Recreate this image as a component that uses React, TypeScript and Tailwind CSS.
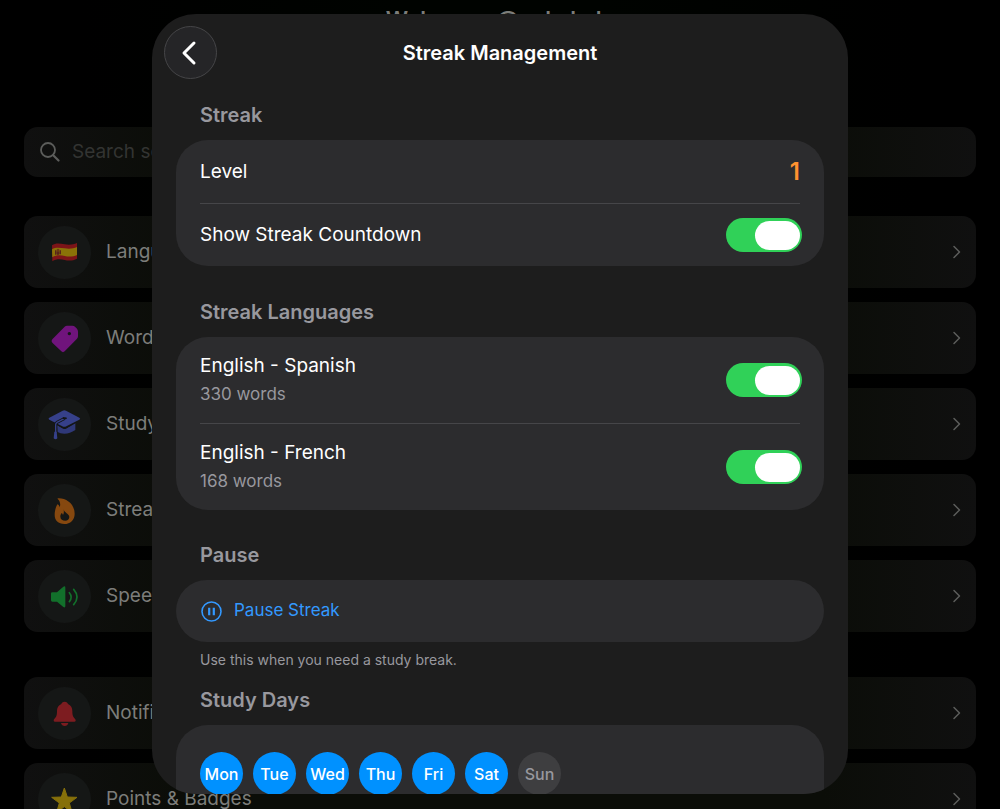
import { useState, type ReactNode } from "react";

function Flag() {
  return (
    <>
      <path d="M42 58 C52 50 66 52 80 55 C94 57 106 56 117 51 V98 C106 104 93 105 80 102 C67 99 54 99 43 106 Z" fill="#7c1418" />
      <path d="M42 70 C52 63 66 65 80 67 C94 69 106 68 117 63 V87 C106 92 93 93 80 90 C67 87 54 87 43 94 Z" fill="#8a7208" />
      <path d="M51 73 h4 v13 h-4z M65 73 h4 v12 h-4z M56 76 h8 v9 q-4 4 -8 0z" fill="#59251a" />
      <path d="M56 71 q4 -5 8 0 v4 h-8z" fill="#6b3a12" />
    </>
  );
}

function Tag() {
  return (
    <path
      fill="#70147c"
      fillRule="evenodd"
      d="M87 41 H103 Q108 41 111 44 L117 50 Q120 54 120 59 V73 Q120 77 117 80 L80 118 Q75 123 70 118 L43 92 Q38 87 43 82 L80 44 Q83 41 87 41 Z M94 60 a5 5 0 1 0 0.010 0 Z"
    />
  );
}

function Cap() {
  return (
    <>
      <path d="M48 76 L76 92 Q80 94 84 92 L112 76 V96 Q96 107 79 107 Q66 107 59 102 L58 84 Z" fill="#2f3878" />
      <path d="M34 67 L73 89 Q79 92 85 89 L124 67" fill="none" stroke="#131516" strokeWidth="3" />
      <path d="M74 38 Q79 36 84 38 L124 59 Q129 62 124 65 L85 85 Q79 88 73 85 L34 65 Q29 62 34 59 Z" fill="#36408a" />
      <path d="M80 61 L57 73 Q53 75 53 80 V84" fill="none" stroke="#131516" strokeWidth="9" />
      <path d="M80 61 L57 73 Q53 75 53 80 V104" fill="none" stroke="#36408a" strokeWidth="4" strokeLinecap="round" />
      <ellipse cx="80" cy="61" rx="7" ry="3" fill="#131516" />
      <path d="M49 101 H56 L58 121 Q53 127 47 121 Z" fill="#36408a" />
    </>
  );
}

function Flame() {
  return (
    <path
      fill="#86480f"
      fillRule="evenodd"
      d="M59 43 C84 41 110 60 110 89 C110 108 97 120 79 120 C61 120 50 109 50 93 C50 80 54 68 58 61 C63 63 64 66 65 70 C69 60 65 50 59 45 Z M77 76 C78 86 94 90 94 99 C94 106 88 110 82 110 C74 110 67 106 67 98 C67 93 69 90 71 87 C74 89 74 91 75 93 C78 88 78 83 77 76 Z"
    />
  );
}

function Speaker() {
  return (
    <>
      <path d="M39 70 Q39 67 43 67 H57 L76 50 Q82 46 82 53 V108 Q82 115 76 111 L57 95 H43 Q39 95 39 91 Z" fill="#12702b" />
      <path d="M94 68 Q105 81 94 95 M107 58 Q127 81 107 104" fill="none" stroke="#12702b" strokeWidth="5" strokeLinecap="round" />
    </>
  );
}

function Bell() {
  return (
    <>
      <path d="M80 44 C86 44 89 47 90 51 C99 55 103 62 103 72 C103 88 106 90 112 97 Q115 104 109 104 H51 Q45 104 48 97 C54 90 57 88 57 72 C57 62 61 55 70 51 C71 47 74 44 80 44 Z" fill="#7d1c20" />
      <path d="M69 108 H91 C89 120 71 120 69 108 Z" fill="#7d1c20" />
    </>
  );
}

function Star() {
  return (
    <path
      fill="#86700a"
      stroke="#86700a"
      strokeWidth="3"
      strokeLinejoin="round"
      d="M79 45 L88 72 L117 73 L94 90 L102 118 L79 101 L56 118 L64 90 L41 73 L70 72 Z"
    />
  );
}

function MenuRow({ label, icon }: { label: string; icon: ReactNode }) {
  return (
    <a href="#" className="flex h-[72px] items-center rounded-[14px] bg-[linear-gradient(90deg,#101010_0%,#0b0d08_16%,#0b0d08_84%,#101010_100%)] pr-[13px] pl-3.5">
      <span className="size-[53px] shrink-0 rounded-full bg-[#151716]">
        <svg viewBox="0 0 159 159" className="size-full" aria-hidden="true">
          {icon}
        </svg>
      </span>
      <span className="ml-[15px] flex-1 text-[19px] leading-7">{label}</span>
      <svg viewBox="0 0 12 16" className="h-4 w-3 text-[#5c5d5b]" fill="none" stroke="currentColor" strokeWidth="1.5" strokeLinecap="round" strokeLinejoin="round" aria-hidden="true">
        <path d="M3 2.500 L8.500 8 L3 13.500" />
      </svg>
    </a>
  );
}

function Switch({ id, initial = true }: { id: string; initial?: boolean }) {
  const [on, setOn] = useState(initial);
  return (
    <input
      id={id}
      type="checkbox"
      role="switch"
      checked={on}
      onChange={(e) => setOn(e.target.checked)}
      className="flex h-[34px] w-[76px] shrink-0 cursor-pointer appearance-none items-center rounded-full bg-[#4a4a4d] p-0.5 before:h-[29px] before:w-[45px] before:rounded-full before:bg-white checked:justify-end checked:bg-[#30d158]"
    />
  );
}

function SectionTitle({ children }: { children: ReactNode }) {
  return <h2 className="px-6 text-xl leading-7 font-semibold text-[#98989e]">{children}</h2>;
}

function Divider() {
  return <div className="mx-6 h-px bg-[#464649]" />;
}

const languages = [
  { id: "es", name: "English - Spanish", words: "330 words" },
  { id: "fr", name: "English - French", words: "168 words" },
];

const week = ["Mon", "Tue", "Wed", "Thu", "Fri", "Sat", "Sun"];

function StudyDays() {
  const [days, setDays] = useState(week.slice(0, 6));
  const toggle = (day: string) =>
    setDays((cur) => (cur.includes(day) ? cur.filter((d) => d !== day) : [...cur, day]));
  return (
    <div className="flex gap-2.5">
      {week.map((day) => {
        const active = days.includes(day);
        return (
          <button
            key={day}
            type="button"
            aria-pressed={active}
            onClick={() => toggle(day)}
            className={
              active
                ? "size-[43px] rounded-full bg-[#0091ff] text-base font-medium text-white"
                : "size-[43px] rounded-full bg-[#3e3e40] text-base font-medium text-[#98989e]"
            }
          >
            {day}
          </button>
        );
      })}
    </div>
  );
}

function StreakSheet() {
  return (
    <div
      role="dialog"
      aria-label="Streak Management"
      className="flex w-full max-w-[696px] flex-col overflow-hidden rounded-[44px] bg-[#1d1d1d] px-6"
    >
      <header className="-mx-3 grid shrink-0 grid-cols-[53px_1fr_53px] items-center pt-3">
        <button
          type="button"
          aria-label="Back"
          className="flex size-[53px] items-center justify-center rounded-full border border-[#464648] bg-[#252527] text-white"
        >
          <svg viewBox="0 0 16 26" className="mr-1 h-[26px] w-4" fill="none" stroke="currentColor" strokeWidth="3" strokeLinecap="round" strokeLinejoin="round" aria-hidden="true">
            <path d="M13 3 L3 13 L13 23" />
          </svg>
        </button>
        <h1 className="text-center text-xl font-semibold text-white">Streak Management</h1>
      </header>

      <section className="mt-[22px]">
        <SectionTitle>Streak</SectionTitle>
        <div className="mt-[11px] rounded-[32px] bg-[#2c2c2e]">
          <div className="flex h-[63px] items-center justify-between px-6">
            <span className="text-[19px] leading-7 text-white">Level</span>
            <span className="text-2xl font-semibold text-[#ff9230]">1</span>
          </div>
          <Divider />
          <div className="flex h-[62px] items-center justify-between pr-[22px] pl-6">
            <label htmlFor="countdown" className="text-[19px] leading-7 text-white">
              Show Streak Countdown
            </label>
            <Switch id="countdown" />
          </div>
        </div>
      </section>

      <section className="mt-8">
        <SectionTitle>Streak Languages</SectionTitle>
        <div className="mt-[11px] rounded-[32px] bg-[#2c2c2e]">
          {languages.map((lang, i) => (
            <div key={lang.id}>
              {i > 0 && <Divider />}
              <div className="flex h-[86px] items-center justify-between pr-[22px] pl-6">
                <label htmlFor={lang.id} className="flex flex-col">
                  <span className="text-[19px] leading-7 text-white">{lang.name}</span>
                  <span className="text-[17px] leading-7 text-[#98989e]">{lang.words}</span>
                </label>
                <Switch id={lang.id} />
              </div>
            </div>
          ))}
        </div>
      </section>

      <section className="mt-[31px]">
        <SectionTitle>Pause</SectionTitle>
        <button
          type="button"
          className="mt-[11px] flex h-[62px] w-full items-center gap-3 rounded-full bg-[#2c2c2e] px-[25px] text-[17px] text-[#3399ff]"
        >
          <svg viewBox="0 0 21 21" className="size-[21px]" fill="none" stroke="currentColor" strokeWidth="1.600" aria-hidden="true">
            <circle cx="10.500" cy="10.500" r="9.500" />
            <path d="M8.200 6.800 V14.200 M12.800 6.800 V14.200" strokeWidth="2.200" />
          </svg>
          Pause Streak
        </button>
        <p className="mt-2 px-6 text-sm leading-5 text-[#98989e]">Use this when you need a study break.</p>
      </section>

      <section className="mt-4">
        <SectionTitle>Study Days</SectionTitle>
        <div className="mt-[11px] rounded-[32px] bg-[#2c2c2e] px-6 py-[27px]">
          <StudyDays />
        </div>
      </section>
    </div>
  );
}

export default function App() {
  return (
    <div className="relative h-screen overflow-hidden bg-black font-['Inter',sans-serif] text-[#7c7d7a]">
      <main className="bg-[linear-gradient(90deg,#000_0%,#000_8%,#000300_40%,#000300_60%,#000_92%)] px-6 pt-[3px]">
        <h1 className="text-center text-[22px] leading-8 font-semibold">Welcome, @nakakola</h1>
        <label className="mt-[92px] flex h-[50px] items-center gap-3 rounded-[14px] bg-[linear-gradient(90deg,#101010_0%,#0b0d08_16%,#0b0d08_84%,#101010_100%)] px-4">
          <svg viewBox="0 0 20 20" className="size-5 shrink-0 text-[#5c5d5b]" fill="none" stroke="currentColor" strokeWidth="1.800" strokeLinecap="round" aria-hidden="true">
            <circle cx="8" cy="8" r="7" />
            <path d="M13.200 13.200 L18.500 18.500" strokeWidth="2.200" />
          </svg>
          <input
            type="search"
            aria-label="Search settings"
            placeholder="Search settings"
            className="w-full bg-transparent text-[19px] outline-none placeholder:text-[#333432]"
          />
        </label>
        <nav className="mt-[39px] flex flex-col gap-[45px]">
          <div className="flex flex-col gap-3.5">
            <MenuRow label="Languages" icon={<Flag />} />
            <MenuRow label="Words" icon={<Tag />} />
            <MenuRow label="Study" icon={<Cap />} />
            <MenuRow label="Streak" icon={<Flame />} />
            <MenuRow label="Speech" icon={<Speaker />} />
          </div>
          <div className="flex flex-col gap-3.5">
            <MenuRow label="Notifications" icon={<Bell />} />
            <MenuRow label="Points & Badges" icon={<Star />} />
          </div>
        </nav>
      </main>
      <div className="absolute inset-0 flex justify-center pt-3.5 pb-[15px]">
        <StreakSheet />
      </div>
    </div>
  );
}
